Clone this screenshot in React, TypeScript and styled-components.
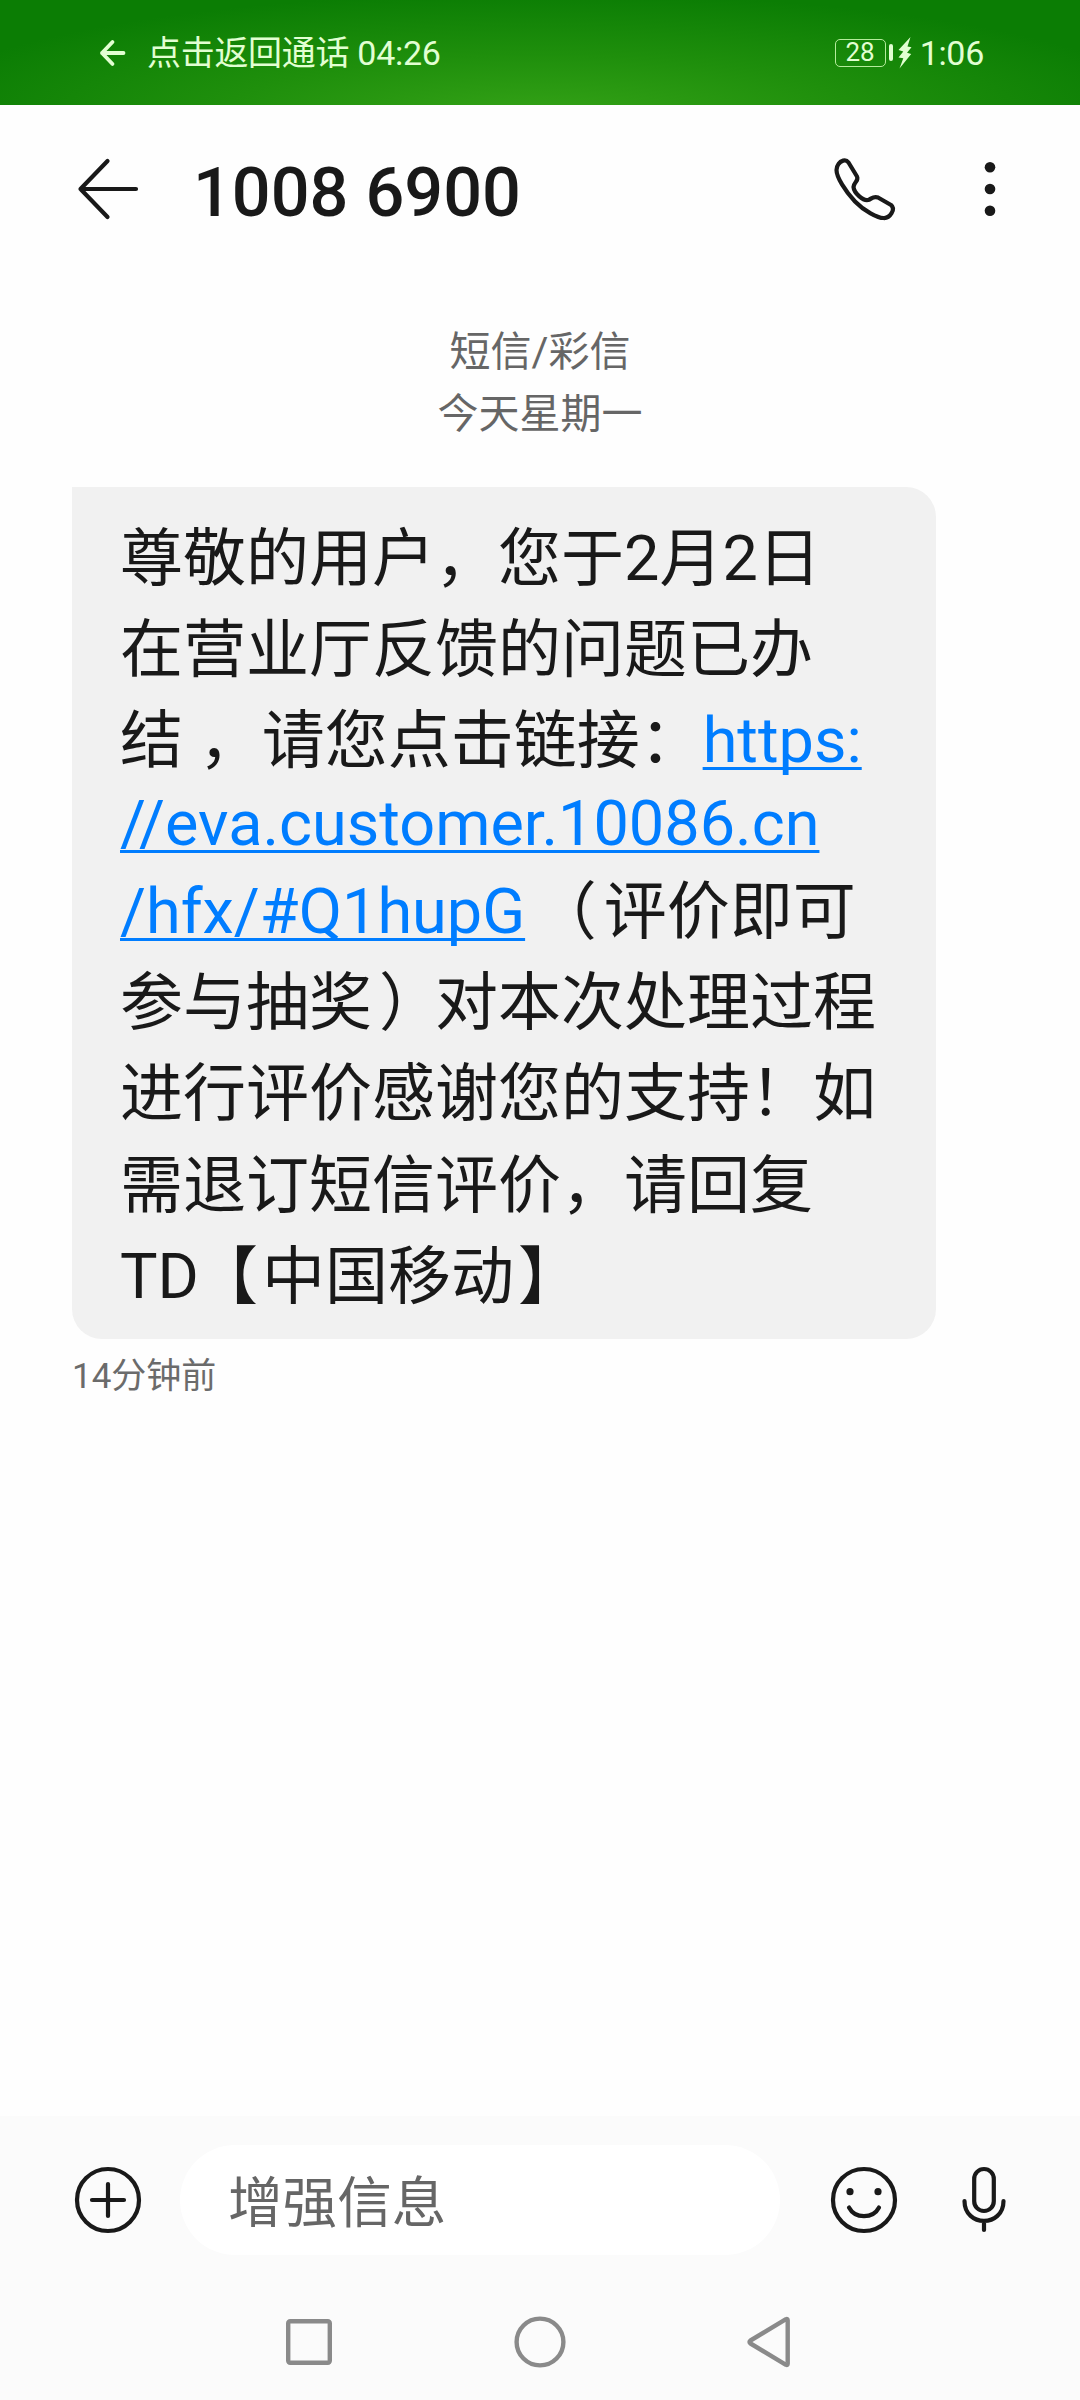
import React from "react";
import styled, { createGlobalStyle } from "styled-components";

const Global = createGlobalStyle`
  * { box-sizing: border-box; }
  body { margin: 0; background: #fff; }
`;

const Screen = styled.div`
  width: 1080px;
  height: 2400px;
  display: flex;
  flex-direction: column;
  background: #fefefe;
  color: #191919;
  font-family: Roboto, "Noto Sans CJK SC", sans-serif;
  text-spacing-trim: space-all;
  overflow: hidden;
`;

const StatusBar = styled.header`
  height: 105px;
  flex: none;
  display: flex;
  align-items: center;
  padding: 0 96px 0 99px;
  color: #e2ffd2;
  background: radial-gradient(ellipse 640px 125px at 50% 112%, #35a317 0%, #1f8f0c 50%, #0b7d04 100%);
`;

const StatusText = styled.span`
  font-size: 34px;
  line-height: 40px;
  letter-spacing: -0.3px;
  white-space: pre;
`;

const CallReturn = styled.div`
  display: flex;
  align-items: center;
  gap: 20px;
  flex: 1;
`;

const Battery = styled.div`
  width: 51px;
  height: 28px;
  border: 1.5px solid #b5ec9c;
  border-radius: 5px;
  font-size: 26px;
  line-height: 25px;
  text-align: center;
`;

const BatteryCap = styled.div`
  width: 4px;
  height: 17px;
  margin-left: 3px;
  border-radius: 2px;
  background: #e2ffd2;
`;

const Bolt = styled.svg`
  margin: 0 8px 0 5px;
`;

const TitleBar = styled.div`
  height: 168px;
  flex: none;
  display: flex;
  align-items: center;
  padding: 0 84px 0 76px;
`;

const Title = styled.h1`
  margin: 0 0 0 51px;
  flex: 1;
  font-size: 68.4px;
  line-height: 80px;
  font-weight: 500;
  padding-top: 8px;
`;

const MoreIcon = styled.svg`
  margin-left: 86px;
`;

const Thread = styled.main`
  flex: 1;
  padding: 48px 72px 0;
  display: flex;
  flex-direction: column;
  align-items: flex-start;
`;

const ThreadMeta = styled.div`
  align-self: stretch;
  text-align: center;
  font-size: 41px;
  line-height: 62px;
  color: #666;
`;

const Bubble = styled.div`
  width: 864px;
  height: 852px;
  margin-top: 42px;
  padding: 25.5px 48px 0;
  border-radius: 0 30px 30px 30px;
  background: #f1f1f1;
  font-size: 63px;
`;

const Line = styled.div<{ $latin?: boolean }>`
  line-height: ${(p) => (p.$latin ? 76 : 91.1)}px;
  padding-bottom: ${(p) => (p.$latin ? 4.5 : 0)}px;
  white-space: pre;
`;

/* Half-width bracket glyph, padded back out to a full em cell. */
const Bracket = styled.span<{ $before: number }>`
  font-feature-settings: "halt";
  margin-left: ${(p) => p.$before}px;
  margin-right: ${(p) => 31.5 - p.$before}px;
`;

const Link = styled.a`
  color: #007dff;
  text-decoration: underline;
  text-decoration-thickness: 3px;
  text-underline-offset: 5px;
  text-decoration-skip-ink: none;
`;

const Timestamp = styled.div`
  margin-top: 18px;
  font-size: 35px;
  line-height: 40px;
  color: #6b6b6b;
`;

const Footer = styled.footer`
  height: 284px;
  flex: none;
  background: #fbfbfb;
`;

const Composer = styled.div`
  height: 168px;
  display: flex;
  align-items: center;
  padding: 0 60px 0 72px;
`;

const Field = styled.div`
  width: 600px;
  height: 110px;
  margin: 0 48px 0 36px;
  padding-left: 48px;
  border-radius: 55px;
  background: #fff;
  color: #666;
  font-size: 54.6px;
  line-height: 117px;
`;

const MicIcon = styled.svg`
  margin-left: 48px;
`;

const NavBar = styled.nav`
  height: 116px;
  display: flex;
  justify-content: center;
  align-items: center;
  gap: 159px;
`;

const ink = { fill: "none", stroke: "#191919", strokeWidth: 4.2, strokeLinecap: "round", strokeLinejoin: "round" } as const;
const nav = { fill: "none", stroke: "#8a8a8a", strokeWidth: 4.4, strokeLinejoin: "round" } as const;

export default function App() {
  return (
    <Screen>
      <Global />
      <StatusBar>
        <CallReturn>
          <svg width="28" height="28" viewBox="0 0 28 28" fill="none" stroke="#e2ffd2" strokeWidth="3.8" strokeLinecap="round" strokeLinejoin="round">
            <path d="M13.5 3 3 14l10.5 11M3 14h21.5" />
          </svg>
          <StatusText>点击返回通话 04:26</StatusText>
        </CallReturn>
        <Battery>28</Battery>
        <BatteryCap />
        <Bolt width="14" height="32" viewBox="0 0 14 32" fill="#e2ffd2">
          <path d="M12.5 0 0.500 13l4.800 1.600L0.500 20.500l4.800.8L1.500 31.500 13.200 17l-4.200-1.300L13.500 10.200 9.500 9.500z" />
        </Bolt>
        <StatusText>1:06</StatusText>
      </StatusBar>

      <TitleBar>
        <svg width="66" height="66" viewBox="0 0 66 66" {...ink}>
          <path d="M31.500 5 4.500 33l27 28M4.500 33H60" />
        </svg>
        <Title>1008 6900</Title>
        <svg width="66" height="66" viewBox="0 0 66 66" {...ink}>
          <path d="M6.500 8C8.500 5 13.500 2.500 16.500 6.500L25 20.500C27 25 22 26 21.500 31C22 37 31 45 36 44C39 43.500 41 39.500 46 41.500L59 49C64 53 58 62.500 51.500 62C46 62 32 55 23 45.500C13 35 4.500 21 4.500 14C4.500 11.500 5 10 6.500 8Z" />
        </svg>
        <MoreIcon width="12" height="66" viewBox="0 0 12 66" fill="#191919">
          <circle cx="6" cy="11.300" r="5.300" />
          <circle cx="6" cy="33" r="5.300" />
          <circle cx="6" cy="54.700" r="5.300" />
        </MoreIcon>
      </TitleBar>

      <Thread>
        <ThreadMeta>
          <div>短信/彩信</div>
          <div>今天星期一</div>
        </ThreadMeta>
        <Bubble>
          <Line>尊敬的用户，您于2月2日</Line>
          <Line>在营业厅反馈的问题已办</Line>
          <Line>结 ，请您点击链接：<Link>https:</Link></Line>
          <Line $latin><Link>//eva.customer.10086.cn</Link></Line>
          <Line><Link>/hfx/#Q1hupG</Link> <Bracket $before={24.5}>（</Bracket>评价即可</Line>
          <Line>参与抽奖<Bracket $before={7}>）</Bracket>对本次处理过程</Line>
          <Line>进行评价感谢您的支持！如</Line>
          <Line>需退订短信评价，请回复</Line>
          <Line>TD<Bracket $before={27.5}>【</Bracket>中国移动<Bracket $before={4}>】</Bracket></Line>
        </Bubble>
        <Timestamp>14分钟前</Timestamp>
      </Thread>

      <Footer>
        <Composer>
          <svg width="72" height="72" viewBox="0 0 72 72" {...ink}>
            <circle cx="36" cy="36" r="31" />
            <path d="M20 36h32M36 20v32" />
          </svg>
          <Field>增强信息</Field>
          <svg width="72" height="72" viewBox="0 0 72 72" {...ink}>
            <circle cx="36" cy="36" r="31" />
            <path d="M21 43.500c6 11.500 24 11.500 30 0" />
            <circle cx="22" cy="27.700" r="3.600" fill="#191919" stroke="none" />
            <circle cx="50" cy="27.700" r="3.600" fill="#191919" stroke="none" />
          </svg>
          <MicIcon width="72" height="72" viewBox="0 0 72 72" {...ink}>
            <rect x="26.200" y="5" width="19.600" height="42" rx="9.800" />
            <path d="M16.500 37c0 26.500 39 26.500 39 0M36 57v9" />
          </MicIcon>
        </Composer>
        <NavBar>
          <svg width="72" height="72" viewBox="0 0 72 72" {...nav}>
            <rect x="15.200" y="15.200" width="41.600" height="41.600" rx="2" />
          </svg>
          <svg width="72" height="72" viewBox="0 0 72 72" {...nav}>
            <circle cx="36" cy="36" r="23.400" />
          </svg>
          <svg width="72" height="72" viewBox="0 0 72 72" {...nav}>
            <path d="M15.500 34.500 51 13.200q1.700-.7 1.700 1v43.600q0 1.700-1.700 1L15.500 37.500q-2-1.500 0-3Z" />
          </svg>
        </NavBar>
      </Footer>
    </Screen>
  );
}
